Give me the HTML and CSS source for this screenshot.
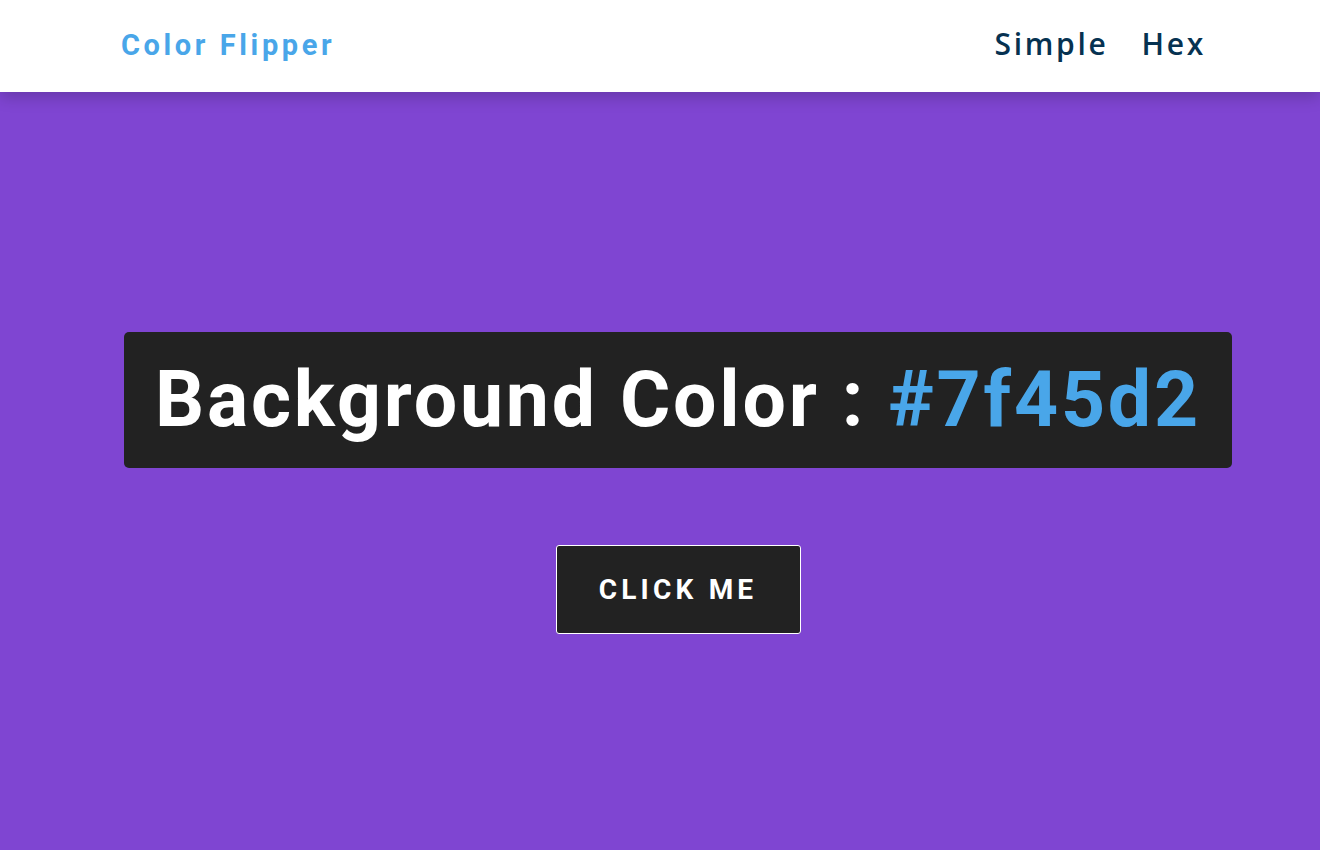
FILE: index.html
```html
<!DOCTYPE html>
<html lang="en">
<head>
<meta charset="utf-8">
<title>Color Flipper</title>
<link rel="stylesheet" href="styles.css">
</head>
<body>
<nav class="nav">
  <div class="nav-center">
    <h4 class="logo">Color Flipper</h4>
    <ul class="nav-links">
      <li><a href="#">Simple</a></li>
      <li><a href="#">Hex</a></li>
    </ul>
  </div>
</nav>
<main class="main">
  <div class="container">
    <h2 class="title">Background Color : <span class="color">#7f45d2</span></h2>
    <button class="btn" type="button">click me</button>
  </div>
</main>
</body>
</html>
```
FILE: styles.css
```css
* { margin: 0; padding: 0; box-sizing: border-box; }
html, body { height: 100%; }
body {
  font-family: Roboto, "Open Sans", sans-serif;
  background: #7f45d2;
  overflow: hidden;
}
.nav {
  height: 92px;
  background: #fff;
  box-shadow: 0 5px 15px rgba(0, 0, 0, 0.2);
  position: relative;
  z-index: 1;
}
.nav-center {
  height: 100%;
  display: flex;
  align-items: center;
  justify-content: space-between;
  padding: 0 114px 3px 121px;
}
.logo {
  font-family: Roboto, sans-serif;
  font-weight: 700;
  font-size: 29px;
  letter-spacing: 3.6px;
  color: #49a6e9;
}
.nav-links {
  list-style: none;
  display: flex;
  gap: 33px;
}
.nav-links a {
  font-family: "Open Sans", sans-serif;
  font-weight: 600;
  font-size: 30px;
  letter-spacing: 2.7px;
  color: #063251;
  text-decoration: none;
  position: relative;
  top: -1px;
}
.main {
  height: calc(100% - 92px);
  display: flex;
  align-items: center;
  justify-content: center;
  padding-left: 36px;
}
.container {
  display: flex;
  flex-direction: column;
  align-items: center;
  gap: 77px;
  margin-top: 24px;
}
.title {
  background: #222;
  color: #fff;
  font-family: Roboto, sans-serif;
  font-weight: 700;
  font-size: 77px;
  letter-spacing: 2.8px;
  line-height: 1;
  padding: 30px 31px 29px;
  border-radius: 5px;
}
.color { color: #49a6e9; }
.btn {
  width: 245px;
  height: 89px;
  background: #222;
  color: #fff;
  border: 1px solid #fff;
  border-radius: 3px;
  font-family: Roboto, sans-serif;
  font-weight: 700;
  font-size: 28px;
  letter-spacing: 4.2px;
  text-transform: uppercase;
  cursor: pointer;
}
```
